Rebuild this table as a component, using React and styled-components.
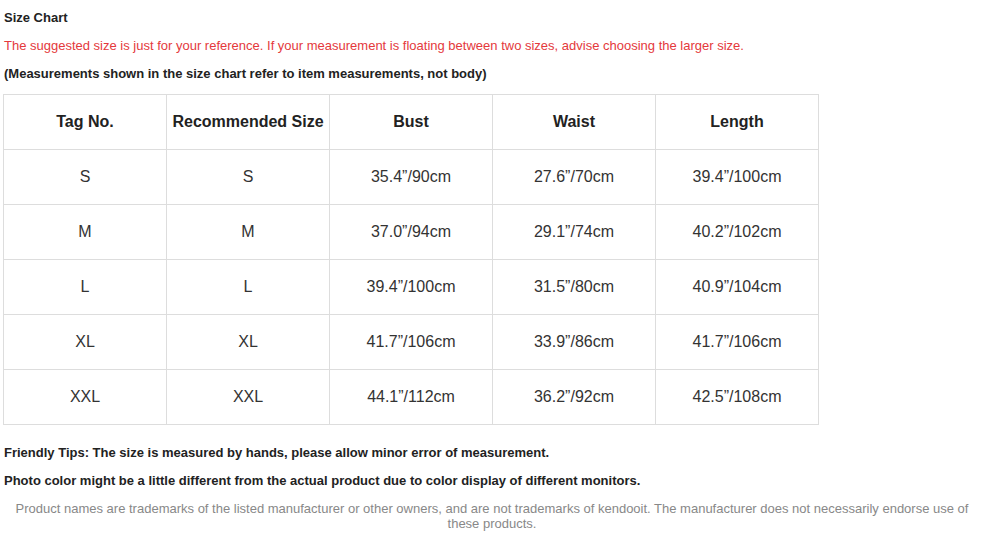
import React from "react";
import styled, { createGlobalStyle } from "styled-components";

const GlobalStyle = createGlobalStyle`
  body {
    margin: 0;
    background: #fff;
    font-family: "Liberation Sans", Arial, sans-serif;
  }
`;

const Page = styled.div`
  padding: 9px 0 0 3px;
  color: #222;
`;

const Line = styled.p`
  margin: 0 0 10px;
  font-size: 13px;
  line-height: 18px;
  padding-left: 1px;
  font-weight: ${({ $bold }) => ($bold ? "bold" : "normal")};
  color: ${({ $red }) => ($red ? "#e4393c" : "#222")};
`;

const Table = styled.table`
  border-collapse: collapse;
  margin: 11px 0 19px;
  table-layout: fixed;
`;

const Head = styled.th`
  width: 162px;
  height: 54px;
  border: 1px solid #ddd;
  font-size: 16px;
  font-weight: bold;
  color: #222;
  text-align: center;
  padding: 0;
`;

const Cell = styled.td`
  height: 54px;
  border: 1px solid #ddd;
  font-size: 16px;
  color: #333;
  text-align: center;
  padding: 0;
`;

const Tips = styled.div`
  margin-bottom: 11px;
`;

const Footer = styled.p`
  margin: 0;
  padding: 0 12px 0 10px;
  font-size: 13px;
  line-height: 15px;
  color: #888;
  text-align: center;
`;

const headers = ["Tag No.", "Recommended Size", "Bust", "Waist", "Length"];

const rows = [
  ["S", "S", "35.4”/90cm", "27.6”/70cm", "39.4”/100cm"],
  ["M", "M", "37.0”/94cm", "29.1”/74cm", "40.2”/102cm"],
  ["L", "L", "39.4”/100cm", "31.5”/80cm", "40.9”/104cm"],
  ["XL", "XL", "41.7”/106cm", "33.9”/86cm", "41.7”/106cm"],
  ["XXL", "XXL", "44.1”/112cm", "36.2”/92cm", "42.5”/108cm"],
];

export default function App() {
  return (
    <>
      <GlobalStyle />
      <Page>
        <Line $bold>Size Chart</Line>
        <Line $red>
          The suggested size is just for your reference. If your measurement is floating between two sizes, advise choosing the larger size.
        </Line>
        <Line $bold>(Measurements shown in the size chart refer to item measurements, not body)</Line>
        <Table>
          <thead>
            <tr>
              {headers.map((h) => (
                <Head key={h}>{h}</Head>
              ))}
            </tr>
          </thead>
          <tbody>
            {rows.map((r) => (
              <tr key={r[0]}>
                {r.map((c, i) => (
                  <Cell key={i}>{c}</Cell>
                ))}
              </tr>
            ))}
          </tbody>
        </Table>
        <Tips>
          <Line $bold>Friendly Tips: The size is measured by hands, please allow minor error of measurement.</Line>
          <Line $bold>Photo color might be a little different from the actual product due to color display of different monitors.</Line>
        </Tips>
      </Page>
      <Footer>
        Product names are trademarks of the listed manufacturer or other owners, and are not trademarks of kendooit. The manufacturer does not necessarily endorse use of these products.
      </Footer>
    </>
  );
}
